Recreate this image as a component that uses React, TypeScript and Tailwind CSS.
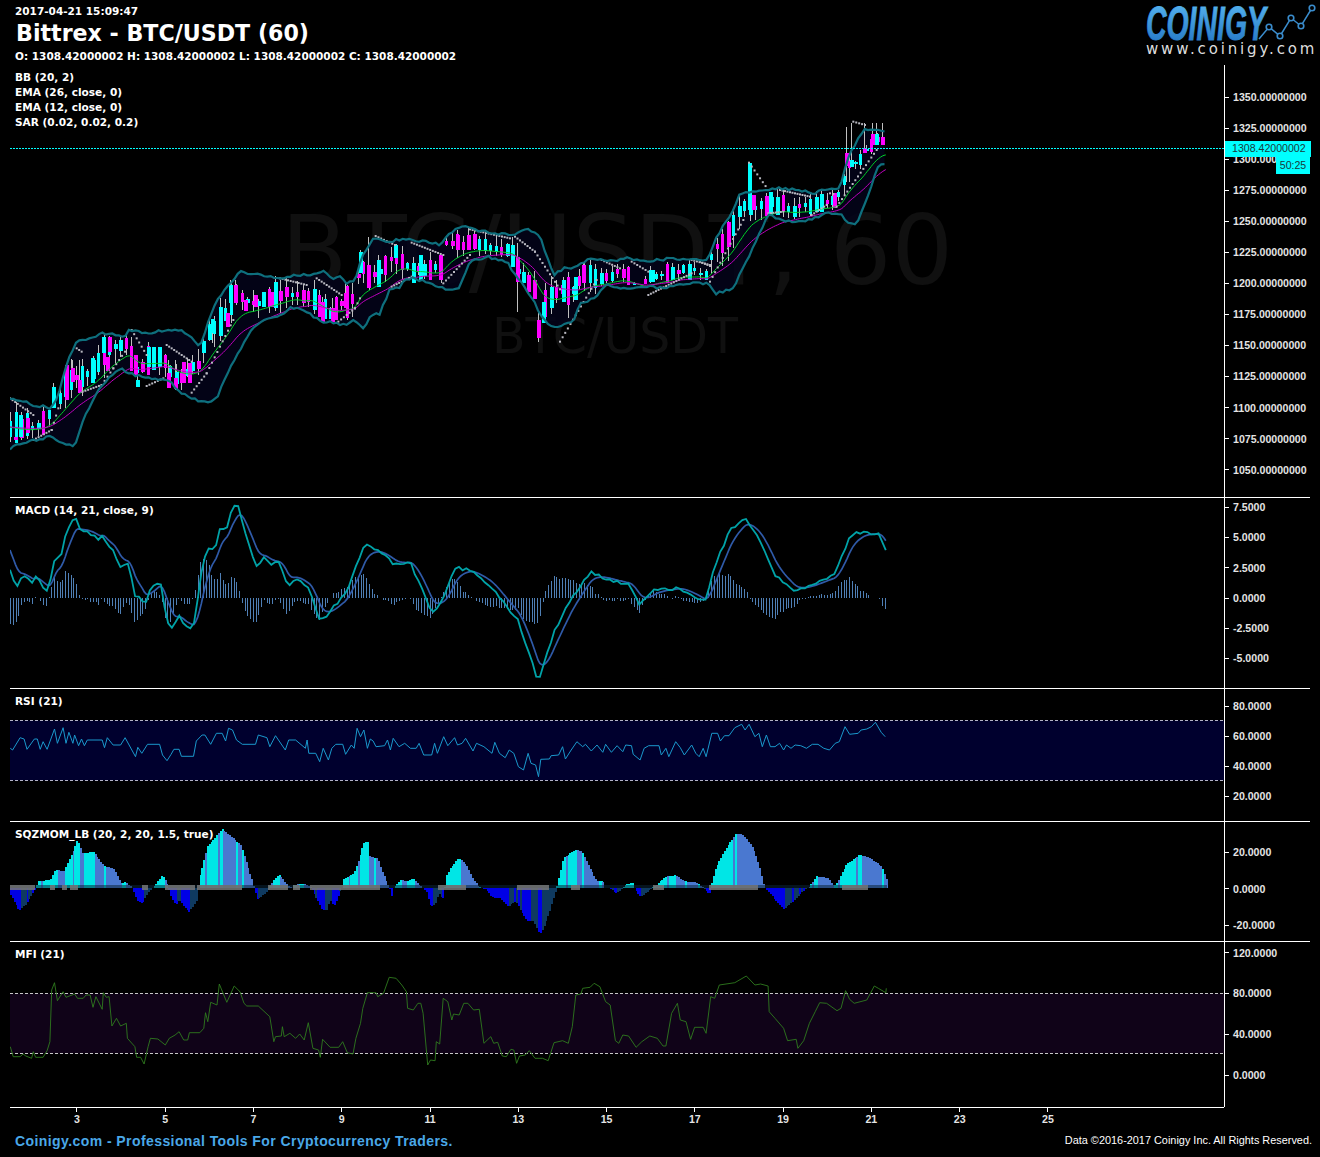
import React from "react";

type P = [number, number];
const pairs = (a: number[], fx: (x: number) => number, fy: (y: number) => number): P[] => {
  const r: P[] = [];
  for (let i = 0; i + 1 < a.length; i += 2) r.push([fx(a[i]), fy(a[i + 1])]);
  return r;
};
const flat = (a: number[]) => pairs(a, (x) => x, (y) => y);
const z3 = (a: number[]) => pairs(a, (x) => x / 3, (y) => 280 + y / 3);
const z4 = (a: number[]) => pairs(a, (x) => 700 + x / 3, (y) => 110 + y / 3);
const z12 = (a: number[]) => pairs(a, (x) => 280 + x / 3, (y) => 200 + y / 3);
const toPath = (p: P[]) => p.map((q, i) => `${i ? "L" : "M"}${q[0].toFixed(1)} ${q[1].toFixed(1)}`).join("");
const interp = (p: P[], x: number) => {
  if (x <= p[0][0]) return p[0][1];
  for (let i = 1; i < p.length; i++) {
    if (x <= p[i][0]) {
      const t = (x - p[i - 1][0]) / (p[i][0] - p[i - 1][0] || 1);
      return p[i - 1][1] + t * (p[i][1] - p[i - 1][1]);
    }
  }
  return p[p.length - 1][1];
};
let seed = 12345;
const rnd = () => {
  seed = (seed * 1664525 + 1013904223) % 4294967296;
  return seed / 4294967296;
};
const jag = (p: P[], step: number, amp: number): P[] => {
  const r: P[] = [];
  for (let x = p[0][0]; x <= p[p.length - 1][0]; x += step) r.push([x, interp(p, x) + (rnd() - 0.5) * amp]);
  return r;
};

// ---------- Main chart data ----------
const bbUpperRaw: P[] = [
  ...z3([30, 360, 70, 362, 100, 378, 140, 380, 155, 385, 175, 345, 200, 250, 230, 180, 260, 180, 310, 160, 370, 170, 390, 150, 450, 160, 490, 150, 545, 150, 570, 170, 600, 200, 640, 80, 670, 35, 690, 10, 720, -24, 786, -15, 840, -6]),
  ...z12([0, 235, 40, 225, 100, 225, 125, 212, 160, 235, 185, 230, 195, 250, 225, 240, 250, 160, 285, 110, 310, 125, 360, 120, 400, 120, 450, 125, 480, 135, 500, 110, 525, 85, 555, 78, 590, 90, 640, 100, 700, 105, 740, 85, 780, 110, 800, 170, 820, 225, 850, 205, 885, 205, 920, 180, 965, 178, 1000, 185, 1040, 175, 1100, 185, 1130, 180, 1180, 175, 1250, 180, 1265, 178]),
  ...z4([10, 450, 25, 445, 50, 380, 105, 290, 120, 250, 150, 245, 220, 235, 300, 240, 340, 250, 370, 240, 420, 235, 430, 190, 450, 130, 490, 60, 520, 60, 560, 68]),
];
const bbLowerRaw: P[] = [
  ...z3([30, 505, 60, 490, 150, 470, 185, 490, 225, 497, 250, 420, 290, 340, 310, 310, 360, 265, 400, 285, 450, 295, 510, 300, 540, 340, 620, 370, 650, 355, 690, 260, 760, 140, 790, 120, 840, 105]),
  ...z12([0, 350, 30, 325, 60, 325, 100, 350, 125, 365, 160, 368, 190, 375, 225, 360, 250, 388, 270, 350, 300, 340, 330, 265, 360, 260, 375, 240, 400, 235, 450, 250, 490, 265, 535, 270, 570, 185, 620, 170, 680, 185, 710, 230, 760, 300, 785, 350, 820, 385, 880, 365, 900, 310, 940, 295, 980, 255, 1040, 265, 1100, 260, 1160, 265, 1200, 250, 1265, 250]),
  ...z4([25, 520, 45, 550, 100, 535, 155, 420, 205, 315, 250, 330, 300, 338, 380, 310, 420, 310, 440, 340, 470, 340, 510, 240, 530, 175, 555, 160]),
];
const bbUpper = jag(bbUpperRaw, 3.3, 2.6);
const bbLower = jag(bbLowerRaw, 3.3, 2.6);
const bbFill = toPath(bbUpper) + toPath([...bbLower].reverse()).replace("M", "L") + "Z";
const mid: P[] = [
  ...z3([30, 440, 90, 440, 135, 420, 174, 345, 225, 285, 276, 276, 315, 216, 354, 195, 381, 186, 405, 276, 441, 240, 489, 234, 516, 291, 564, 279, 591, 255, 624, 156, 666, 114, 705, 39, 750, 75, 810, 54]),
  ...z12([0, 285, 30, 275, 75, 300, 85, 280, 115, 330, 155, 345, 195, 305, 215, 310, 240, 200, 265, 230, 293, 220, 320, 200, 345, 155, 365, 180, 400, 220, 420, 200, 450, 215, 480, 200, 500, 130, 530, 130, 565, 130, 600, 135, 640, 145, 690, 150, 712, 205, 740, 250, 760, 290, 775, 345, 790, 340, 810, 300, 850, 270, 885, 265, 910, 225, 945, 235, 980, 230, 1020, 220, 1060, 250, 1085, 265, 1120, 225, 1160, 225, 1190, 205, 1220, 220, 1250, 215, 1280, 235]),
  ...z4([30, 425, 60, 405, 90, 370, 110, 320, 130, 290, 150, 280, 180, 290, 210, 285, 240, 280, 265, 300, 320, 290, 350, 275, 380, 278, 400, 272, 420, 250, 435, 170, 450, 162, 480, 150, 495, 122, 520, 88, 545, 92, 558, 110]),
];
type Candle = { x: number; t: number; b: number; wt: number; wb: number; c: string; w: number };
const CY = "#00ffff";
const MG = "#ff00ff";
const candles: Candle[] = [];
for (let x = 10; x <= 884; x += 5.52) {
  const m = interp(mid, x) + (rnd() - 0.5) * 6;
  const quiet = x > 600 && x < 710 ? 0.55 : x > 850 ? 0.35 : 1;
  const h = (2 + rnd() * rnd() * 20) * quiet;
  const up = interp(bbUpperRaw, x) + 3;
  const lo = interp(bbLowerRaw, x) - 3;
  const t = Math.max(m - h, up);
  const b = Math.min(m + h, lo);
  if (b - t < 2) continue;
  candles.push({
    x,
    t,
    b,
    wt: Math.max(t - rnd() * 12 * quiet, up - 4),
    wb: Math.min(b + rnd() * 14 * quiet, lo),
    c: rnd() > 0.42 ? CY : MG,
    w: rnd() > 0.6 ? 4 : 3,
  });
}
const mk = (ox: number, oy: number, list: (number | string)[][]): Candle[] =>
  list.map(([x, t, b, wt, wb, c]) => ({
    x: ox + (x as number) / 3,
    t: oy + (t as number) / 3,
    b: oy + (b as number) / 3,
    wt: oy + (wt as number) / 3,
    wb: oy + (wb as number) / 3,
    c: c as string,
    w: 4,
  }));
const extra: Candle[] = [
  ...mk(0, 280, [
    [45, 470, 480, 460, 490, MG], [60, 405, 470, 405, 470, CY], [82, 415, 460, 415, 460, MG], [160, 320, 385, 310, 385, CY], [198, 255, 360, 250, 360, MG], [215, 265, 305, 240, 305, MG],
    [238, 300, 340, 240, 340, MG], [275, 235, 310, 235, 310, CY], [310, 170, 220, 170, 220, CY], [328, 170, 215, 170, 215, MG], [320, 230, 272, 230, 272, MG], [405, 225, 285, 225, 285, MG], [410, 300, 320, 270, 320, CY],
    [445, 200, 260, 200, 260, CY], [458, 200, 270, 200, 270, CY], [478, 200, 260, 200, 260, CY], [505, 280, 325, 240, 325, MG], [525, 295, 328, 240, 330, MG], [548, 245, 310, 245, 310, MG], [568, 250, 308, 250, 308, MG],
    [635, 118, 158, 118, 190, CY], [680, 98, 142, 98, 142, MG], [690, 15, 70, 0, 70, CY], [706, 15, 70, 0, 70, MG], [735, 60, 92, 60, 92, MG], [765, 45, 80, 45, 80, MG], [790, 35, 82, 35, 82, CY], [812, 35, 82, 35, 82, MG],
  ]),
  ...mk(280, 200, [
    [345, 135, 175, 135, 175, CY], [240, 155, 220, 150, 220, CY], [265, 195, 265, 110, 265, MG], [293, 180, 262, 165, 262, CY], [400, 190, 250, 170, 250, CY],
    [420, 165, 240, 165, 240, CY], [480, 165, 240, 165, 240, MG], [530, 105, 150, 95, 150, MG], [565, 105, 150, 105, 150, MG], [712, 170, 245, 130, 335, MG],
    [775, 360, 415, 335, 425, MG], [790, 305, 370, 305, 370, CY], [850, 240, 305, 230, 305, CY], [885, 230, 300, 230, 300, CY], [910, 195, 250, 185, 250, MG],
    [125, 305, 365, 290, 370, MG], [157, 325, 365, 295, 365, MG], [195, 280, 325, 250, 325, MG], [745, 225, 275, 215, 285, MG], [1115, 210, 245, 210, 245, CY],
  ]),
  ...mk(700, 110, [
    [146, 160, 300, 160, 300, CY], [160, 255, 300, 255, 300, MG], [210, 245, 318, 245, 318, CY], [402, 250, 295, 250, 295, MG], [438, 130, 168, 50, 215, MG],
    [454, 150, 172, 40, 172, CY], [493, 115, 130, 40, 130, MG], [515, 72, 105, 40, 105, MG], [528, 72, 105, 40, 105, CY], [545, 80, 105, 40, 105, MG],
  ]),
];
const allCandles = [...candles, ...extra];
const ema = (alpha: number) => {
  let v = interp(mid, 10);
  const r: P[] = [];
  for (let x = 10; x <= 886; x += 1.84) {
    v += alpha * (interp(mid, x) + 4 + (rnd() - 0.5) * 3 - v);
    r.push([x, v]);
  }
  return r;
};
const ema12 = ema(0.1);
const ema26 = ema(0.05);
const sarSegs: [P, P][] = [];
const seg = (p: P[]) => {
  for (let i = 1; i < p.length; i++) sarSegs.push([p[i - 1], p[i]]);
};
seg(z3([30, 355, 100, 405]));
seg(z3([100, 480, 155, 450, 175, 385]));
seg(z3([230, 205, 245, 215]));
seg(z3([248, 335, 305, 315, 340, 265, 375, 215]));
seg(z3([395, 150, 440, 225]));
seg(z3([440, 318, 490, 295]));
seg(z3([500, 195, 575, 245]));
seg(z3([575, 338, 620, 280, 700, 120]));
seg(z12([0, 235, 80, 255]));
seg(z12([110, 235, 185, 285]));
seg(z12([175, 365, 225, 325, 240, 295]));
seg(z12([287, 108, 345, 135]));
seg(z12([335, 260, 395, 230]));
seg(z12([395, 128, 490, 165]));
seg(z12([490, 250, 570, 165]));
seg(z12([570, 88, 690, 115]));
seg(z12([705, 110, 765, 155, 840, 268]));
seg(z12([840, 425, 950, 240]));
seg(z12([965, 180, 1020, 205]));
seg(z12([1055, 185, 1105, 215]));
seg(z12([1105, 285, 1235, 220]));
seg(z12([1235, 180, 1290, 195]));
seg(z4([0, 455, 30, 468]));
seg(z4([30, 515, 130, 330]));
seg(z4([147, 158, 205, 240]));
seg(z4([205, 310, 250, 305]));
seg(z4([240, 240, 330, 260]));
seg(z4([335, 315, 380, 285]));
seg(z4([390, 250, 400, 252]));
seg(z4([410, 290, 530, 120]));
seg(z4([460, 35, 495, 45]));
const sarDots: P[] = [];
sarSegs.forEach(([a, b]) => {
  const n = Math.max(1, Math.round(Math.abs(b[0] - a[0]) / 2.6));
  for (let i = 0; i <= n; i++) sarDots.push([a[0] + ((b[0] - a[0]) * i) / n, a[1] + ((b[1] - a[1]) * i) / n]);
});

// ---------- MACD ----------
const macdKey: P[] = [
  ...pairs([30, 240, 50, 290, 70, 255, 95, 280, 110, 258, 125, 290, 145, 305, 165, 195, 180, 215, 190, 170, 200, 120, 225, 75, 240, 120, 265, 125, 300, 150, 310, 130, 320, 170, 340, 180, 360, 235, 385, 220, 405, 320, 420, 315, 435, 350, 450, 300, 480, 268, 500, 390, 520, 420, 535, 375, 555, 410, 580, 415, 610, 210, 630, 170, 645, 180, 660, 110, 680, 120, 695, 55, 715, 45, 740, 150, 770, 230, 795, 200, 810, 220, 840, 220, 865, 295, 885, 260, 900, 270], (x) => x / 3, (y) => 490 + y / 3),
  ...flat([310, 590, 320, 623, 335, 605, 345, 595, 355, 570, 365, 545, 380, 552, 395, 565, 410, 562, 420, 585, 432, 615, 445, 595, 455, 568, 470, 570, 490, 585, 505, 605, 518, 620, 528, 650, 538, 682, 545, 660, 555, 630, 570, 600, 590, 572, 610, 580, 630, 585, 640, 605, 655, 590, 680, 588, 705, 603, 715, 565, 730, 530, 745, 518, 760, 540, 775, 575, 795, 592, 815, 583, 835, 575, 850, 535, 865, 532, 880, 535, 886, 552]),
];
const macdLine = jag(macdKey, 3.68, 3.2);
let sigV = 545;
const sigLine: P[] = jag(macdKey, 1.84, 0).map((p) => {
  sigV += 0.2 * (p[1] - sigV);
  return [p[0], sigV] as P;
});
const macdHist: { x: number; v: number }[] = [];
for (let x = 10; x <= 887; x += 2.76) {
  macdHist.push({ x, v: (interp(sigLine, x) - interp(macdLine, x)) * 1.3 });
}

// ---------- RSI / MFI ----------
const rsi = pairs([18, 100, 22, 105, 35, 68, 42, 72, 47, 103, 60, 72, 65, 72, 70, 103, 75, 80, 82, 103, 95, 42, 100, 85, 110, 38, 115, 85, 120, 52, 127, 85, 130, 60, 137, 92, 142, 72, 147, 92, 152, 75, 178, 75, 182, 98, 187, 68, 197, 90, 210, 90, 218, 68, 236, 125, 240, 97, 247, 115, 257, 88, 278, 88, 283, 120, 291, 137, 298, 118, 303, 103, 312, 103, 316, 124, 337, 124, 342, 78, 352, 60, 357, 60, 367, 88, 377, 55, 387, 55, 393, 78, 398, 40, 405, 45, 412, 75, 422, 88, 445, 88, 450, 60, 465, 68, 470, 95, 480, 62, 497, 105, 503, 75, 515, 75, 532, 100, 535, 75, 538, 115, 550, 115, 557, 140, 563, 100, 572, 135, 578, 100, 585, 88, 597, 88, 602, 118, 612, 90, 617, 100, 622, 40, 628, 65, 634, 45, 640, 100, 645, 72, 650, 78, 655, 95, 670, 92, 675, 75, 680, 105, 685, 70, 695, 95, 705, 85, 715, 100, 725, 100, 730, 85, 738, 120, 752, 120, 757, 85, 762, 115, 773, 65, 780, 92, 792, 68, 797, 90, 805, 85, 811, 70, 824, 108, 830, 85, 843, 95, 857, 115, 862, 82, 870, 115, 880, 128, 887, 105, 895, 115, 903, 155, 912, 165, 920, 115, 925, 145, 933, 150, 938, 185, 942, 133, 957, 132, 960, 122, 973, 120, 980, 95, 985, 132, 995, 105, 1005, 80, 1015, 95, 1020, 88, 1030, 108, 1040, 90, 1050, 112, 1055, 88, 1065, 112, 1075, 92, 1085, 110, 1090, 90, 1100, 92, 1103, 118, 1115, 135, 1122, 100, 1130, 92, 1148, 92, 1152, 120, 1160, 100, 1165, 125, 1177, 80, 1185, 98, 1192, 120, 1205, 90, 1212, 115, 1218, 125, 1225, 100, 1230, 125, 1240, 55, 1250, 55, 1255, 78, 1262, 62, 1270, 62, 1280, 38, 1292, 28, 1298, 45, 1305, 28, 1315, 65, 1322, 55, 1328, 95, 1335, 60, 1342, 95, 1350, 95, 1358, 85, 1365, 105, 1370, 90, 1378, 100, 1385, 90, 1395, 92, 1405, 100, 1415, 88, 1425, 88, 1435, 100, 1445, 105, 1455, 85, 1462, 80, 1472, 35, 1480, 58, 1495, 55, 1500, 45, 1510, 42, 1518, 35, 1525, 22, 1535, 52, 1542, 65], (x) => x / 1.742, (y) => 715 + y / 3);
const mfi = pairs([18, 230, 23, 260, 35, 260, 40, 252, 45, 258, 55, 265, 58, 245, 62, 262, 75, 262, 82, 242, 87, 215, 90, 60, 95, 38, 100, 92, 110, 65, 115, 82, 130, 72, 135, 85, 145, 85, 150, 75, 157, 75, 162, 112, 167, 80, 178, 118, 180, 68, 185, 82, 190, 80, 195, 168, 203, 145, 210, 168, 220, 160, 222, 205, 235, 230, 238, 262, 245, 262, 251, 282, 258, 230, 262, 205, 275, 207, 288, 225, 295, 205, 305, 195, 312, 185, 320, 210, 327, 210, 330, 188, 348, 188, 355, 175, 358, 128, 362, 155, 367, 97, 378, 105, 382, 42, 395, 97, 408, 48, 418, 65, 425, 100, 430, 108, 450, 108, 470, 140, 477, 215, 480, 200, 490, 198, 492, 170, 495, 200, 505, 190, 515, 205, 522, 192, 530, 210, 537, 158, 545, 235, 555, 240, 558, 262, 562, 208, 575, 232, 590, 232, 597, 215, 605, 248, 615, 252, 620, 205, 628, 160, 632, 115, 640, 68, 655, 68, 658, 80, 668, 70, 678, 22, 690, 25, 700, 45, 708, 65, 710, 115, 720, 120, 728, 100, 733, 100, 737, 130, 745, 285, 750, 270, 758, 272, 760, 215, 766, 222, 772, 85, 780, 95, 787, 150, 790, 132, 800, 135, 808, 100, 815, 100, 825, 120, 835, 118, 843, 220, 855, 200, 860, 220, 867, 217, 875, 258, 882, 260, 890, 238, 895, 240, 900, 280, 905, 258, 915, 255, 922, 242, 932, 265, 945, 265, 955, 272, 965, 218, 980, 212, 990, 220, 997, 170, 1003, 75, 1012, 72, 1015, 55, 1028, 52, 1035, 40, 1045, 50, 1055, 95, 1063, 105, 1072, 212, 1078, 220, 1085, 195, 1095, 198, 1108, 232, 1118, 215, 1132, 198, 1145, 205, 1155, 228, 1160, 228, 1170, 130, 1180, 100, 1185, 150, 1195, 155, 1203, 208, 1210, 172, 1225, 172, 1230, 190, 1238, 80, 1245, 85, 1253, 45, 1280, 38, 1300, 18, 1315, 45, 1325, 42, 1338, 48, 1340, 125, 1350, 145, 1365, 175, 1372, 212, 1387, 208, 1390, 235, 1400, 212, 1410, 160, 1420, 125, 1428, 98, 1440, 100, 1458, 122, 1465, 115, 1473, 62, 1480, 88, 1488, 100, 1510, 90, 1523, 48, 1530, 55, 1543, 68, 1544, 55], (x) => x / 1.742, (y) => 970 + y / 3);

// ---------- SQZMOM ----------
const z6 = (a: number[]) => pairs(a, (x) => x / 3, (y) => (205 - y) / 3);
const z11 = (a: number[]) => pairs(a, (x) => 280 + x / 2.529, (y) => (190 - y) / 3);
const sqz: P[] = [
  ...z6([30, 225, 55, 272, 75, 255, 100, 215, 105, 205, 110, 185, 150, 180, 165, 150, 190, 155, 215, 100, 230, 60, 245, 100, 280, 97, 310, 140, 340, 148, 360, 190, 375, 188, 395, 205, 410, 245, 425, 250, 445, 215, 465, 195, 485, 165, 500, 195, 510, 230, 525, 255, 535, 240, 565, 278, 590, 240, 595, 180, 620, 80, 665, 28, 720, 75, 755, 185, 770, 240, 800, 215, 820, 180, 835, 165, 860, 195]),
  ...z11([0, 150, 10, 165, 20, 185, 30, 190, 35, 180, 60, 178, 70, 183, 78, 190, 80, 195, 105, 257, 118, 255, 125, 225, 135, 245, 150, 200, 155, 190, 158, 165, 185, 145, 195, 115, 210, 55, 220, 52, 225, 97, 245, 100, 255, 135, 270, 180, 275, 190, 280, 215, 285, 190, 303, 165, 320, 170, 335, 160, 350, 180, 360, 190, 368, 200, 380, 248, 392, 235, 400, 205, 410, 225, 415, 190, 420, 150, 430, 130, 450, 100, 470, 120, 485, 160, 500, 185, 520, 195, 535, 218, 555, 220, 575, 245, 595, 230, 610, 265, 625, 290, 640, 290, 655, 328, 665, 310, 680, 260, 695, 200, 700, 180, 715, 100, 745, 75, 762, 80, 780, 125, 800, 170, 815, 170, 820, 190, 835, 192, 845, 205, 860, 198, 870, 180, 890, 175, 895, 190, 910, 218, 930, 198, 945, 185, 975, 155, 1000, 152, 1020, 170, 1050, 172, 1065, 185, 1085, 210, 1087, 190, 1100, 130, 1120, 85, 1150, 28, 1170, 30, 1195, 70, 1210, 125, 1222, 185, 1230, 195, 1250, 225, 1272, 255, 1300, 225, 1325, 195, 1335, 190, 1355, 155, 1385, 160, 1395, 180, 1405, 180, 1430, 120, 1465, 90, 1490, 100, 1520, 125, 1535, 170, 1537, 190]),
];
const sqzBars: { x: number; v: number; c: string }[] = [];
{
  let prev = interp(sqz, 10);
  for (let x = 10; x <= 886; x += 1.84) {
    const v = interp(sqz, x);
    const up = v >= prev;
    const flip = rnd() < 0.12;
    const rising = flip ? !up : up;
    const c = v >= 0 ? (rising ? "#00e6e6" : "#4a78d0") : rising ? "#0f3a60" : "#0000e6";
    sqzBars.push({ x, v, c });
    prev = v;
  }
}
const greySegs: [number, number][] = [
  [10, 35], [50, 55], [62, 67], [70, 78], [142, 148], [165, 195], [197, 242], [268, 288], [293, 300],
  [310, 380], [438, 466], [517, 549], [571, 580], [653, 664], [709, 758], [842, 868],
];

// ---------- UI helpers ----------
const mono = "[font-family:'DejaVu_Sans',sans-serif] font-bold text-white";
const axisText = "[font-family:'Liberation_Sans',sans-serif] font-bold text-[10.6px] text-[#e4e4e4]";

function Ticks({ labels, rowClass, padClass }: { labels: string[]; rowClass: string; padClass: string }) {
  return (
    <div className={`flex flex-col ${padClass}`}>
      {labels.map((l) => (
        <div key={l} className={`flex items-center shrink-0 ${rowClass}`}>
          <span className="w-[4px] h-px bg-white" />
          <span className={`ml-[4px] leading-none whitespace-nowrap ${axisText}`}>{l}</span>
        </div>
      ))}
    </div>
  );
}

function Panel({
  h,
  viewBox,
  height,
  labels,
  rowClass,
  padClass,
  legend,
  children,
  overlay,
  axisOverlay,
  bordered = true,
}: {
  h: string;
  viewBox: string;
  height: number;
  labels: string[];
  rowClass: string;
  padClass: string;
  legend: string[];
  children: React.ReactNode;
  overlay?: React.ReactNode;
  axisOverlay?: React.ReactNode;
  bordered?: boolean;
}) {
  return (
    <div className={`flex ml-[10px] w-[1300px] shrink-0 ${h} ${bordered ? "border-t border-white" : ""}`}>
      <div className="relative w-[1214px] shrink-0">
        {overlay}
        <svg className="absolute inset-0 block" width={1214} height={height} viewBox={viewBox}>
          {children}
        </svg>
        <div className="absolute left-[5px] top-[5px] flex flex-col">
          {legend.map((l) => (
            <span key={l} className={`text-[10.55px] leading-[15px] whitespace-nowrap ${mono}`}>
              {l}
            </span>
          ))}
        </div>
      </div>
      <div className="relative flex-1 border-l border-white">
        <Ticks labels={labels} rowClass={rowClass} padClass={padClass} />
        {axisOverlay}
      </div>
    </div>
  );
}

function Logo() {
  return (
    <div className="flex flex-col items-start w-[170px]">
      <svg width={170} height={38} viewBox="0 0 170 38" className="block overflow-visible">
        <defs>
          <linearGradient id="lg" x1="0" y1="0" x2="0" y2="1">
            <stop offset="0" stopColor="#5cbcf5" />
            <stop offset="1" stopColor="#1f70c0" />
          </linearGradient>
        </defs>
        <text
          x={0}
          y={37}
          textLength={120}
          lengthAdjust="spacingAndGlyphs"
          fontFamily="'Liberation Sans',sans-serif"
          fontWeight={700}
          fontStyle="italic"
          fontSize={49}
          fill="url(#lg)"
          stroke="url(#lg)"
          strokeWidth={0.9}
        >
          COINIGY
        </text>
        <polyline points="113,36 123,24 134,33 145,15 155,23 166,5" fill="none" stroke="#3a8ccc" strokeWidth={1.5} />
        {[[123, 24], [134, 33], [145, 15], [155, 23], [166, 5]].map(([x, y]) => (
          <circle key={x} cx={x} cy={y} r={2.8} fill="#000" stroke="#3a8ccc" strokeWidth={1.6} />
        ))}
      </svg>
      <span className="[font-family:'DejaVu_Sans',sans-serif] text-[15px] leading-[15px] mt-px tracking-[2.85px] text-[#dddddd] whitespace-nowrap">
        www.coinigy.com
      </span>
    </div>
  );
}

const days = ["3", "5", "7", "9", "11", "13", "15", "17", "19", "21", "23", "25"];

export default function App() {
  return (
    <div className="w-[1320px] h-[1157px] bg-black flex flex-col overflow-hidden">
      <header className="h-[65px] flex justify-between shrink-0 pl-[15px] pr-[4px]">
        <div className="flex flex-col pt-[4px]">
          <span className={`text-[10.5px] leading-[14px] ${mono}`}>2017-04-21 15:09:47</span>
          <span className={`text-[22.15px] leading-[28px] mt-px ${mono} pl-px`}>Bittrex - BTC/USDT (60)</span>
          <span className={`text-[10.5px] leading-[14px] mt-[2px] ${mono}`}>
            O: 1308.42000002 H: 1308.42000002 L: 1308.42000002 C: 1308.42000002
          </span>
        </div>
        <div className="pt-[3px]">
          <Logo />
        </div>
      </header>

      <Panel
        h="h-[432px]"
        viewBox="10 65 1214 432"
        height={432}
        bordered={false}
        labels={["1350.00000000", "1325.00000000", "1300.00000000", "1275.00000000", "1250.00000000", "1225.00000000", "1200.00000000", "1175.00000000", "1150.00000000", "1125.00000000", "1100.00000000", "1075.00000000", "1050.00000000"]}
        rowClass="h-[31.08px]"
        padClass="pt-[16.5px]"
        legend={["BB (20, 2)", "EMA (26, close, 0)", "EMA (12, close, 0)", "SAR (0.02, 0.02, 0.2)"]}
        overlay={
          <>
            <span className="absolute left-[271px] top-[137px] text-[97px] leading-none text-[#101010] whitespace-nowrap [font-family:'DejaVu_Sans',sans-serif]">
              BTC/USDT, 60
            </span>
            <span className="absolute left-[482px] top-[247px] text-[49px] leading-none text-[#101010] whitespace-nowrap [font-family:'DejaVu_Sans',sans-serif]">
              BTC/USDT
            </span>
          </>
        }
        axisOverlay={
          <>
            <div className="absolute left-0 top-[76px] w-[86px] h-[16px] bg-[#00ffff] flex items-center pl-[7px] [font-family:'Liberation_Sans',sans-serif] text-[10.6px] text-[#1a3a3a]">
              1308.42000002
            </div>
            <div className="absolute right-0 top-[92px] w-[34px] h-[17px] bg-[#00ffff] flex items-center justify-center [font-family:'Liberation_Sans',sans-serif] text-[10.6px] text-[#1a3a3a]">
              50:25
            </div>
          </>
        }
      >
        <path d={bbFill} fill="#03031a" fillOpacity={0.85} />
        {allCandles.map((c, i) => (
          <rect key={`w${i}`} x={Math.round(c.x)} y={c.wt} width={1} height={c.wb - c.wt} fill="#c0c0c0" shapeRendering="crispEdges" />
        ))}
        {allCandles.map((c, i) => (
          <rect key={`b${i}`} x={Math.round(c.x) - 1} y={c.t} width={c.w} height={c.b - c.t} fill={c.c} shapeRendering="crispEdges" />
        ))}
        <path d={toPath(ema12)} fill="none" stroke="#00d028" strokeWidth={1} />
        <path d={toPath(ema26)} fill="none" stroke="#c000c0" strokeWidth={1} />
        {sarDots.map((d, i) => (
          <rect key={`s${i}`} x={d[0] - 1} y={d[1] - 1} width={2} height={2} fill="#b8b8c0" />
        ))}
        <path d={toPath(bbUpper)} fill="none" stroke="#0e6f7d" strokeWidth={2.2} />
        <path d={toPath(bbLower)} fill="none" stroke="#0e6f7d" strokeWidth={2.2} />
        <line x1={10} x2={1224} y1={148.5} y2={148.5} stroke="#00ffff" strokeWidth={1} strokeDasharray="2 1" />
      </Panel>

      <Panel
        h="h-[191px]"
        viewBox="10 498 1214 190"
        height={190}
        labels={["7.5000", "5.0000", "2.5000", "0.0000", "-2.5000", "-5.0000"]}
        rowClass="h-[30.2px]"
        padClass="-mt-[5.5px]"
        legend={["MACD (14, 21, close, 9)"]}
      >
        {macdHist.map((b, i) => (
          <rect key={i} x={Math.round(b.x)} y={b.v >= 0 ? 598 - b.v : 598} width={1} height={Math.abs(b.v)} fill="#4f7fb5" shapeRendering="crispEdges" />
        ))}
        <path d={toPath(sigLine)} fill="none" stroke="#2f5aa8" strokeWidth={1.7} />
        <path d={toPath(macdLine)} fill="none" stroke="#00a3a8" strokeWidth={1.8} />
      </Panel>

      <Panel
        h="h-[133px]"
        viewBox="10 689 1214 132"
        height={132}
        labels={["80.0000", "60.0000", "40.0000", "20.0000"]}
        rowClass="h-[30px]"
        padClass="pt-[2px]"
        legend={["RSI (21)"]}
      >
        <rect x={10} y={720.5} width={1214} height={60} fill="#00002e" />
        <line x1={10} x2={1224} y1={720.5} y2={720.5} stroke="#b4b4c8" strokeDasharray="3 2" />
        <line x1={10} x2={1224} y1={780.5} y2={780.5} stroke="#b4b4c8" strokeDasharray="3 2" />
        <path d={toPath(rsi)} fill="none" stroke="#1a98cc" strokeWidth={1} />
      </Panel>

      <Panel
        h="h-[120px]"
        viewBox="10 822 1214 119"
        height={119}
        labels={["20.0000", "0.0000", "-20.0000"]}
        rowClass="h-[36.5px]"
        padClass="pt-[12.2px]"
        legend={["SQZMOM_LB (20, 2, 20, 1.5, true)"]}
      >
        {sqzBars.map((b, i) => (
          <rect key={i} x={Math.round(b.x)} y={b.v >= 0 ? 888 - b.v : 888} width={2} height={Math.abs(b.v)} fill={b.c} shapeRendering="crispEdges" />
        ))}
        <rect x={10} y={885} width={877} height={3} fill="#0b2436" fillOpacity={0.55} />
        {greySegs.map(([a, b]) => (
          <rect key={a} x={a} y={885} width={b - a} height={5} fill="#777777" fillOpacity={0.85} shapeRendering="crispEdges" />
        ))}
      </Panel>

      <Panel
        h="h-[166px]"
        viewBox="10 942 1214 165"
        height={165}
        labels={["120.0000", "80.0000", "40.0000", "0.0000"]}
        rowClass="h-[40.7px]"
        padClass="-mt-[9.4px]"
        legend={["MFI (21)"]}
      >
        <rect x={10} y={993.5} width={1214} height={60} fill="#100318" />
        <line x1={10} x2={1224} y1={993.5} y2={993.5} stroke="#c8c8c8" strokeDasharray="3 2" />
        <line x1={10} x2={1224} y1={1053.5} y2={1053.5} stroke="#c8c8c8" strokeDasharray="3 2" />
        <path d={toPath(mfi)} fill="none" stroke="#2f7a1e" strokeWidth={0.9} />
      </Panel>

      <div className="ml-[10px] w-[1214px] h-[23px] shrink-0 border-t border-white flex pl-[22.85px]">
        {days.map((d) => (
          <div key={d} className="w-[88.27px] shrink-0 flex flex-col items-center">
            <span className="w-px h-[4px] bg-white" />
            <span className={`leading-[14px] ${axisText}`}>{d}</span>
          </div>
        ))}
      </div>

      <footer className="flex-1 flex justify-between items-start pl-[15px] pr-[8px] pt-[3px]">
        <span className="[font-family:'Liberation_Sans',sans-serif] font-bold text-[14px] leading-[16px] tracking-[0.42px] text-[#4aa8e8] whitespace-nowrap">
          Coinigy.com - Professional Tools For Cryptocurrency Traders.
        </span>
        <span className="[font-family:'Liberation_Sans',sans-serif] text-[10.9px] leading-[14px] text-white whitespace-nowrap">
          Data ©2016-2017 Coinigy Inc. All Rights Reserved.
        </span>
      </footer>
    </div>
  );
}
